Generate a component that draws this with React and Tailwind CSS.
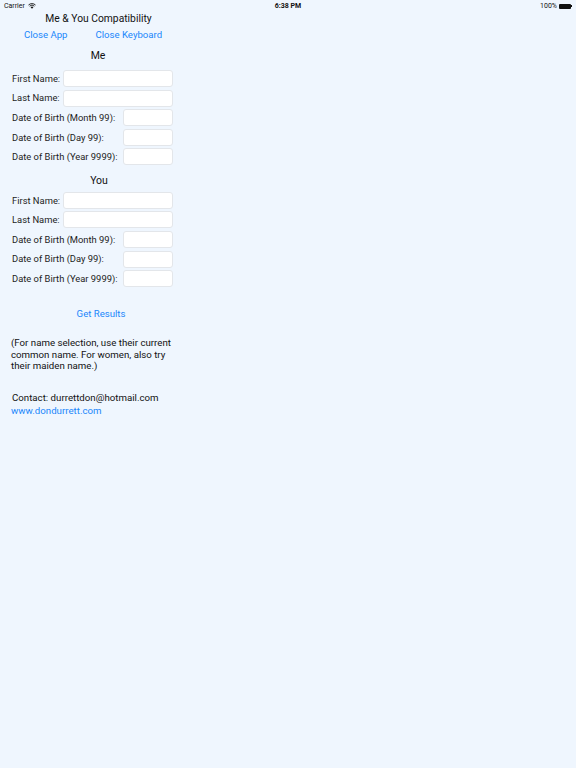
import React from "react";

const font = { fontFamily: 'Roboto, "Liberation Sans", Arial, sans-serif' };

function Row({ label, wide }) {
  return (
    <div className="flex items-center justify-between h-[17px] mb-[2.6px]">
      <span className="text-[9.4px] text-[#1c1c1c] leading-none whitespace-nowrap">{label}</span>
      <div
        className={
          (wide ? "w-[110px]" : "w-[50px]") +
          " shrink-0 h-[17px] bg-white border border-[#e3e6ea] rounded-[3px]"
        }
      />
    </div>
  );
}

function Group() {
  return (
    <div className="w-[173px] pl-[12px]">
      <Row label="First Name:" wide />
      <Row label="Last Name:" wide />
      <Row label="Date of Birth (Month 99):" />
      <Row label="Date of Birth (Day 99):" />
      <Row label="Date of Birth (Year 9999):" />
    </div>
  );
}

export default function App() {
  return (
    <div className="w-[576px] h-[768px] bg-[#eff6fe] text-[#111]" style={font}>
      {/* status bar */}
      <div className="h-[12px] flex items-center justify-between px-[4px] text-[7px] leading-none">
        <div className="flex items-center gap-[3px] w-[80px]">
          <span>Carrier</span>
          <svg width="8" height="6" viewBox="0 0 16 12">
            <path d="M8 11.5 L5.2 8.3 A4.2 4.2 0 0 1 10.8 8.3 Z" fill="#111" />
            <path d="M3.2 6.3 A7 7 0 0 1 12.8 6.3" stroke="#111" strokeWidth="1.8" fill="none" />
            <path d="M1 4 A10.2 10.2 0 0 1 15 4" stroke="#111" strokeWidth="1.8" fill="none" />
          </svg>
        </div>
        <span className="font-bold">6:38 PM</span>
        <div className="flex items-center justify-end gap-[2px] w-[80px]">
          <span>100%</span>
          <div className="flex items-center">
            <div className="w-[12px] h-[5px] bg-[#111] rounded-[1px]" />
            <div className="w-[1px] h-[2px] bg-[#111]" />
          </div>
        </div>
      </div>

      <div className="w-[200px]">
        <div className="text-center text-[10.3px] leading-[12px] w-[197px] mt-[0.5px]">Me &amp; You Compatibility</div>
        <div className="flex mt-[4.5px] text-[9.6px] leading-[12px] text-[#1a86fb]">
          <span className="ml-[24px]">Close App</span>
          <span className="ml-[28px]">Close Keyboard</span>
        </div>
        <div className="mt-[9px] text-[10.5px] leading-[12px] w-[196px] text-center">Me</div>
        <div className="mt-[8px]">
          <Group />
        </div>
        <div className="mt-[9.5px] text-[10.5px] leading-[12px] w-[198px] text-center">You</div>
        <div className="mt-[5px]">
          <Group />
        </div>
        <div className="mt-[20.5px] text-[9.6px] leading-[12px] w-[202px] text-center text-[#1a86fb]">
          Get Results
        </div>
        <div className="mt-[17.5px] pl-[11px] text-[9.7px] leading-[11.6px] w-[180px]">
          (For name selection, use their current common name. For women, also try their maiden name.)
        </div>
        <div className="mt-[19.5px] pl-[12px] text-[9.7px] leading-[12px]">
          Contact: durrettdon@hotmail.com
        </div>
        <div className="mt-[1px] pl-[11px] text-[9.7px] leading-[12px] text-[#1a86fb]">
          www.dondurrett.com
        </div>
      </div>
    </div>
  );
}
